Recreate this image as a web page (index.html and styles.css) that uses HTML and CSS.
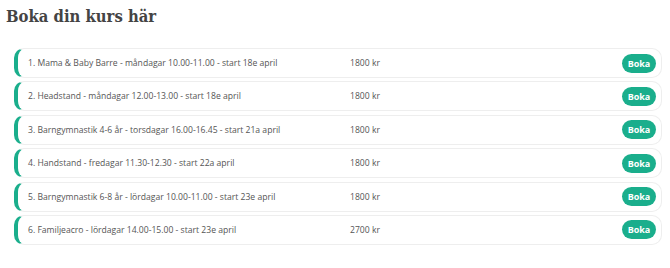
FILE: index.html
```html
<!DOCTYPE html>
<html lang="sv">
<head>
<meta charset="utf-8">
<link rel="stylesheet" href="styles.css">
</head>
<body>
<main class="page">
  <h1 class="title">Boka din kurs här</h1>
  <ul class="courses">
    <li class="course"><span class="name">1. Mama &amp; Baby Barre - måndagar 10.00-11.00 - start 18e april</span><span class="price">1800 kr</span><button class="book">Boka</button></li>
    <li class="course"><span class="name">2. Headstand - måndagar 12.00-13.00 - start 18e april</span><span class="price">1800 kr</span><button class="book">Boka</button></li>
    <li class="course"><span class="name">3. Barngymnastik 4-6 år - torsdagar 16.00-16.45 - start 21a april</span><span class="price">1800 kr</span><button class="book">Boka</button></li>
    <li class="course"><span class="name">4. Handstand - fredagar 11.30-12.30 - start 22a april</span><span class="price">1800 kr</span><button class="book">Boka</button></li>
    <li class="course"><span class="name">5. Barngymnastik 6-8 år - lördagar 10.00-11.00 - start 23e april</span><span class="price">1800 kr</span><button class="book">Boka</button></li>
    <li class="course"><span class="name">6. Familjeacro - lördagar 14.00-15.00 - start 23e april</span><span class="price">2700 kr</span><button class="book">Boka</button></li>
  </ul>
</main>
</body>
</html>
```

FILE: styles.css
```css
html, body {
  margin: 0;
  padding: 0;
  background: #fff;
}
.page {
  padding: 6px 8px 0 6px;
}
.title {
  margin: 0;
  font-family: "DejaVu Serif", serif;
  font-weight: bold;
  font-stretch: condensed;
  font-size: 16.5px;
  line-height: 22px;
  color: #444;
}
.courses {
  list-style: none;
  margin: 20px 0 0 8px;
  padding: 0;
  display: flex;
  flex-direction: column;
  gap: 3.4px;
}
.course {
  display: flex;
  align-items: center;
  height: 30px;
  box-sizing: border-box;
  border: 1px solid #eee;
  border-left: 4px solid #1aae8c;
  border-radius: 10px;
  padding: 0 5px 0 10px;
  font-family: "Open Sans", sans-serif;
  font-size: 8.6px;
  color: #555;
}
.name {
  width: 322px;
  white-space: nowrap;
}
.price {
  flex: 1;
}
.book {
  border: none;
  background: #1aae8c;
  color: #fff;
  font-family: "Open Sans", sans-serif;
  font-weight: bold;
  font-size: 9px;
  height: 19px;
  width: 34px;
  padding: 0;
  border-radius: 10px;
}
```
